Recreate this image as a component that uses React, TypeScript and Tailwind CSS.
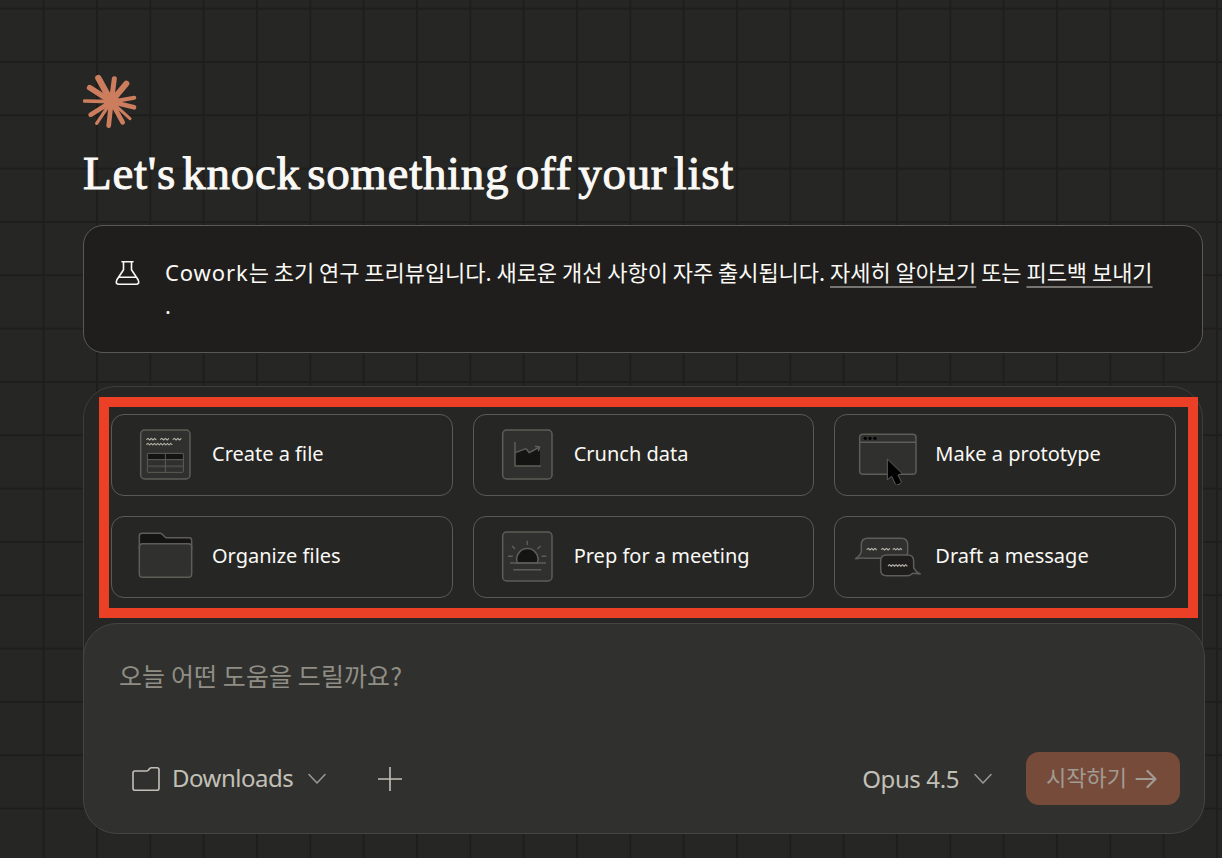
import type { ReactNode } from 'react'

interface Suggestion {
  id: string
  label: string
  icon: ReactNode
}

const STROKE = '#5e5d57'
const PANEL = '#30302e'
const INK = '#141413'

// Small zigzag that stands in for a line of text inside the illustrations
function Scribble({ x, y, width }: { x: number; y: number; width: number }) {
  const steps = Math.round(width / 5)
  const step = width / steps
  let d = `M${x} ${y + 2}`
  for (let i = 1; i <= steps; i++) {
    d += ` L${x + i * step} ${i % 2 ? y - 2 : y + 3}`
  }
  return <path d={d} fill="none" stroke="#b8b5a9" strokeWidth="3.2" />
}

function Illustration({ children }: { children: ReactNode }) {
  return (
    <svg
      viewBox="0 0 216 180"
      className="h-[60px] w-[72px] shrink-0"
      fill={PANEL}
      stroke={STROKE}
      strokeWidth="4.5"
      strokeLinejoin="round"
    >
      {children}
    </svg>
  )
}

const suggestions: Suggestion[] = [
  {
    id: 'file',
    label: 'Create a file',
    icon: (
      <Illustration>
        <rect x="35" y="15" width="148" height="147" rx="12" />
        <Scribble x={52} y={42} width={30} />
        <Scribble x={93} y={42} width={27} />
        <Scribble x={131} y={42} width={26} />
        <Scribble x={52} y={57} width={78} />
        <rect x="55" y="85" width="108" height="57" rx="2" strokeWidth="3" />
        <path d="M57 87h104v15H57z" fill={INK} stroke="none" />
        <path d="M56 124h106" strokeWidth="6" stroke="#474743" />
        <path d="M55 104h108M109 85v57" strokeWidth="3" />
      </Illustration>
    )
  },
  {
    id: 'data',
    label: 'Crunch data',
    icon: (
      <Illustration>
        <rect x="35" y="15" width="148" height="147" rx="12" />
        <path d="M72 84 L105 71 L115 83 L147 68 V122 H72Z" fill={INK} stroke="none" />
        <path d="M72 51 V123 H150" fill="none" />
        <path d="M73 83 L105 71 L115 83 L146 66 M132 64 L146 66 L142 79" fill="none" />
      </Illustration>
    )
  },
  {
    id: 'prototype',
    label: 'Make a prototype',
    icon: (
      <Illustration>
        <rect x="23" y="28" width="169" height="120" rx="10" />
        <path d="M23 52h169" />
        <g fill="#000" stroke="none">
          <circle cx="40" cy="40" r="5" />
          <circle cx="54" cy="40" r="5" />
          <circle cx="69" cy="40" r="5" />
        </g>
        <path
          d="M106 102 V164 L119 154 L130 177 Q133 182 138 179 L145 176 Q149 173 147 168 L138 150 L151 146 Z"
          fill="#000"
          strokeWidth="3"
        />
      </Illustration>
    )
  },
  {
    id: 'organize',
    label: 'Organize files',
    icon: (
      <Illustration>
        <path d="M31 66 V27 q0-8 8-8 H93 q4 0 7 3 l7 7 q3 3 7 3 H180 q8 0 8 8 V66Z" fill={INK} />
        <rect x="31" y="50" width="157" height="101" rx="10" />
      </Illustration>
    )
  },
  {
    id: 'meeting',
    label: 'Prep for a meeting',
    icon: (
      <Illustration>
        <rect x="35" y="15" width="148" height="147" rx="12" />
        <path d="M79 108 A32 32 0 1 1 139 108Z" fill={INK} />
        <path d="M57 108h108M67 128h84M109 41v13M63 57l9 9M149 57l-10 9M51 88h14M152 88h14" />
      </Illustration>
    )
  },
  {
    id: 'message',
    label: 'Draft a message',
    icon: (
      <Illustration>
        <path d="M28 54 q0-20 20-20 H147 q20 0 20 20 V75 q0 19-20 19 H45 Q33 91 11 95 Q26 85 28 73Z" />
        <Scribble x={44} y={66} width={30} />
        <Scribble x={87} y={66} width={27} />
        <Scribble x={122} y={66} width={28} />
        <path
          d="M86 102 q0-18 18-18 H167 q18 0 18 18 V122 Q192 136 205 141 Q192 140 181 139 Q176 146 167 146 H104 q-18 0-18-18Z"
          fill="#1f1e1d"
        />
        <Scribble x={108} y={115} width={58} />
      </Illustration>
    )
  }
]

// x, y of the tip and thickness
const rays: [number, number, number][] = [
  [295, 234, 19],
  [343, 236, 15],
  [379, 251, 18],
  [403, 293, 12],
  [402, 322, 14],
  [390, 356, 9],
  [368, 367, 14],
  [326, 377, 14],
  [290, 370, 10],
  [272, 344, 14],
  [254, 303, 11],
  [269, 263, 17]
]

function Starburst() {
  return (
    <svg viewBox="249 222 162 162" className="h-[54px] w-[54px]">
      <g stroke="#cc7d5e" strokeLinecap="round">
        {rays.map(([x, y, w]) => (
          <line key={`${x}-${y}`} x1="334" y1="305" x2={x} y2={y} strokeWidth={w} />
        ))}
      </g>
      <circle cx="334" cy="305" r="23" fill="#cc7d5e" />
    </svg>
  )
}

function Chevron() {
  return (
    <svg viewBox="0 0 18 12" className="h-3 w-[18px] shrink-0" fill="none" stroke="#9c9a92" strokeWidth="1.5">
      <path d="M1 1.5 L9 10 L17 1.5" strokeLinecap="round" strokeLinejoin="round" />
    </svg>
  )
}

export default function App() {
  return (
    <div className="h-[858px] w-[1222px] overflow-hidden bg-[#262624] bg-[linear-gradient(to_right,#1f1e1d_2px,transparent_2px),linear-gradient(to_bottom,#1f1e1d_2px,transparent_2px)] bg-[size:53.333px_53.333px] bg-[position:-10.67px_7.67px] pt-[74px] pl-[83px] font-['Noto_Sans','Noto_Sans_CJK_KR',sans-serif] text-[#faf9f5]">
      {/* Header */}
      <Starburst />
      <h1 className="mt-[17px] h-[56px] font-['Liberation_Serif',serif] text-[47px] leading-[56px] tracking-[0.7px] whitespace-nowrap [-webkit-text-stroke:1px_#faf9f5] [word-spacing:-6px]">
        Let's knock something off your list
      </h1>

      {/* Research preview notice */}
      <div className="mt-[24px] flex h-[128px] w-[1120px] rounded-[20px] border border-[#5a5955] bg-[#1f1e1d] pt-[29px] pl-[31px]">
        <svg
          viewBox="0 0 26 26"
          className="mt-[5px] h-[26px] w-[26px] shrink-0"
          fill="none"
          stroke="#faf9f5"
          strokeWidth="1.6"
          strokeLinejoin="round"
          strokeLinecap="round"
        >
          <path d="M7 1.7H18M8.5 1.7V9.8L1.9 19.8Q0 24.3 4 24.3H21Q25 24.3 23.1 19.8L16.500 9.800V1.700M4.200 17.200H21" />
        </svg>
        <p className="ml-[24px] text-[22px] leading-[33px] whitespace-nowrap">
          <span className="tracking-[0.9px]">Cowork</span>
          <span className="font-['Noto_Sans_CJK_KR',sans-serif] tracking-[-0.04px]">
            는 초기 연구 프리뷰입니다. 새로운 개선 사항이 자주 출시됩니다.{' '}
            <a className="underline decoration-[#767571] decoration-2 underline-offset-[5px] [text-decoration-skip-ink:none]">
              자세히 알아보기
            </a>{' '}
            또는{' '}
            <a className="underline decoration-[#767571] decoration-2 underline-offset-[5px] [text-decoration-skip-ink:none]">
              피드백 보내기
            </a>
          </span>
          <br />.
        </p>
      </div>

      {/* Suggestions */}
      <div className="relative mt-[33px] h-[320px] w-[1120px] rounded-[32px] border border-[#3e3d3a] bg-[#262624] pt-[27px] pr-[26px] pl-[27px]">
        <div className="grid grid-cols-3 gap-5">
          {suggestions.map((item) => (
            <button
              key={item.id}
              className="flex h-[82px] items-center rounded-[13px] border border-[#5a5955] pl-[17px] text-left"
            >
              {item.icon}
              <span className="-mt-[2px] ml-[11px] text-[20px] leading-7 whitespace-nowrap">{item.label}</span>
            </button>
          ))}
        </div>
        <div className="pointer-events-none absolute top-[10px] left-[15px] h-[221px] w-[1099px] border-[10px] border-[#eb4026]" />
      </div>

      {/* Composer */}
      <div className="relative mt-[-83px] flex h-[211px] w-[1122px] flex-col justify-between rounded-[34px] border border-[#454441] bg-[#30302e] pt-[33px] pr-[24px] pb-[28px] pl-[35px]">
        <div className="font-['Noto_Sans_CJK_KR',sans-serif] text-[25px] leading-9 tracking-[0.1px] text-[#8f8d84]">
          오늘 어떤 도움을 드릴까요?
        </div>
        <div className="flex h-[53px] items-center text-[24px] text-[#c2c0b6]">
          <svg
            viewBox="0 0 28 26"
            className="ml-[13px] h-[26px] w-[28px]"
            fill="none"
            stroke="currentColor"
            strokeWidth="1.6"
          >
            <path d="M3 5H14.5Q15.5 5 16.2 4.2L17.6 2.6Q18.4 1.7 19.5 1.7H25Q27 1.7 27 3.7V22.3Q27 24.3 25 24.3H3Q1 24.3 1 22.3V7Q1 5 3 5Z" />
          </svg>
          <span className="-mt-[2px] mr-[15px] ml-[12px] tracking-[-0.5px]">Downloads</span>
          <Chevron />
          <svg viewBox="0 0 24 24" className="ml-[52px] h-6 w-6" stroke="currentColor" strokeWidth="1.6">
            <path d="M0 12h24M12 0v24" />
          </svg>
          <span className="mr-[15px] ml-auto tracking-[-0.4px]">Opus 4.5</span>
          <Chevron />
          <button className="ml-[34px] flex h-[53px] w-[154px] items-center rounded-[13px] bg-[#774b3a] pl-5 text-[#a19b94]">
            <span className="-mt-[4px] font-['Noto_Sans_CJK_KR',sans-serif] text-[22px]">시작하기</span>
            <svg
              viewBox="0 0 22 20"
              className="ml-[8px] h-5 w-[22px]"
              fill="none"
              stroke="currentColor"
              strokeWidth="2.2"
              strokeLinecap="round"
              strokeLinejoin="round"
            >
              <path d="M1.5 10H20.5M12.5 2L20.5 10L12.5 18" />
            </svg>
          </button>
        </div>
      </div>
    </div>
  )
}
